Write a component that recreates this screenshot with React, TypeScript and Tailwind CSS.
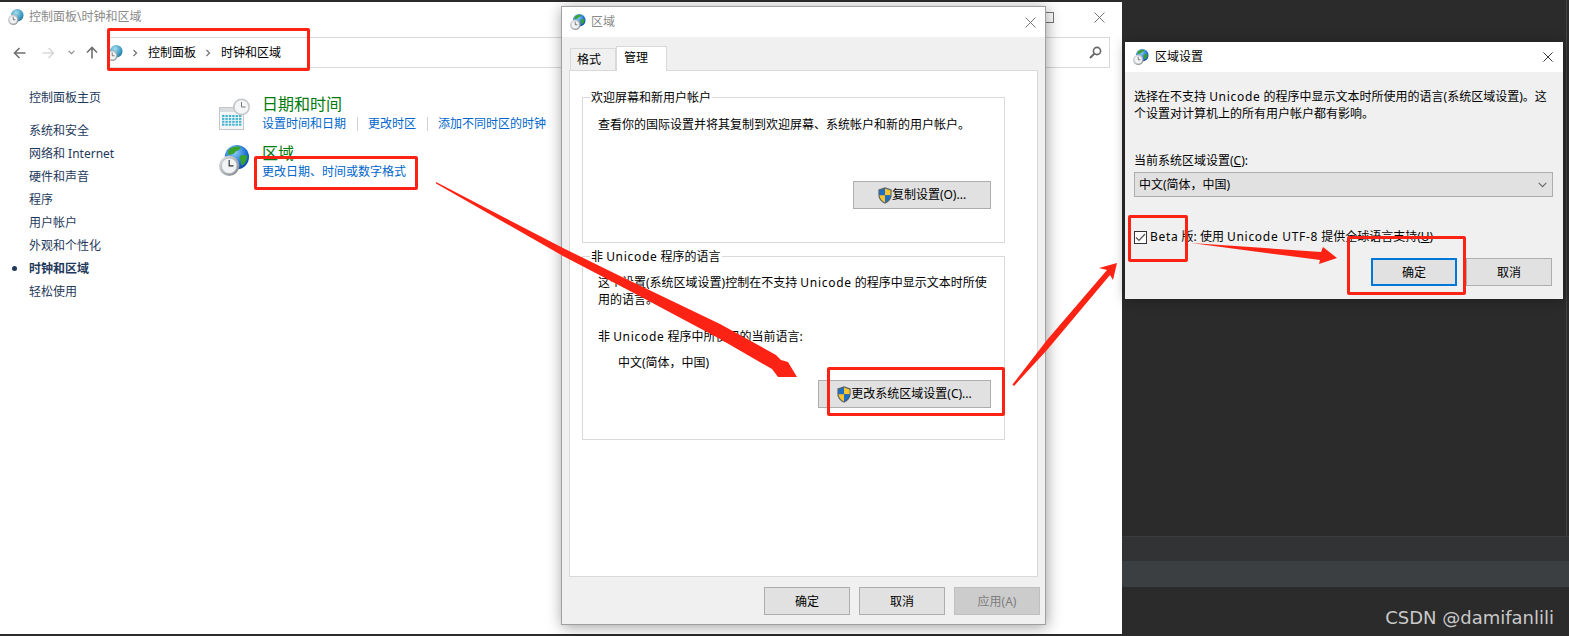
import React from "react";

function ClockGlobe({ size, pale = false, id }: { size: number; pale?: boolean; id: string }) {
  return (
    <svg width={size} height={size} viewBox="0 0 32 32" className="shrink-0">
      <defs>
        <radialGradient id={id + "g"} cx="0.4" cy="0.3" r="0.8">
          <stop offset="0" stopColor={pale ? "#a8dcee" : "#8fd0f5"} />
          <stop offset="0.6" stopColor={pale ? "#3f9dc4" : "#1f72d2"} />
          <stop offset="1" stopColor={pale ? "#1f6f96" : "#0c3f9c"} />
        </radialGradient>
        <linearGradient id={id + "c"} x1="0" y1="0" x2="1" y2="1">
          <stop offset="0" stopColor="#e8eaec" />
          <stop offset="1" stopColor="#7d8387" />
        </linearGradient>
      </defs>
      <circle cx="18.5" cy="12.5" r="12.5" fill={`url(#${id}g)`} />
      {!pale && (
        <path
          d="M10 5c3-3 9-4 12-3 1 2-2 3-3 4-2 0-2 2-4 3-2 0-3 2-5 1-1-1-1-3 0-5zM22 11c2-1 5-1 7 0 0 4-2 8-5 10-2-1-1-4-2-6-1-1-1-3 0-4z"
          fill="#39a32e"
        />
      )}
      <circle cx="10.5" cy="21.5" r="10.5" fill={`url(#${id}c)`} />
      <circle cx="10.5" cy="21.5" r="8" fill="#f2f3f4" stroke="#a6aaad" strokeWidth="0.6" />
      <path d="M10.5 15.5v6l4.5 0" fill="none" stroke="#333" strokeWidth="1.2" />
    </svg>
  );
}

function CalendarClock() {
  const cells: React.ReactElement[] = [];
  for (let r = 0; r < 4; r++) {
    for (let c = 0; c < 6; c++) {
      cells.push(<rect key={`${r}-${c}`} x={3 + c * 3.4} y={17 + r * 2.9} width="2.4" height="2" fill="#42b3d0" />);
    }
  }
  return (
    <svg width="31" height="33" viewBox="0 0 31 33" className="shrink-0">
      <rect x="0.5" y="9.5" width="24" height="22" fill="#f4f6f7" stroke="#c3c7c9" />
      <rect x="1" y="10" width="23" height="4" fill="#d9dde0" />
      {cells}
      <circle cx="22.5" cy="9" r="8.5" fill="#c6c9cb" />
      <circle cx="22.5" cy="9" r="6.8" fill="#f5f6f7" />
      <path d="M22.5 4v5h4" fill="none" stroke="#777" strokeWidth="1" />
    </svg>
  );
}

function Shield() {
  return (
    <svg width="14" height="17" viewBox="0 0 14 17" className="shrink-0">
      <path d="M7 0.3 13.6 2.6V8c0 4-2.8 7-6.6 8.7C3.2 15 0.4 12 0.4 8V2.6z" fill="#59626b" />
      <path d="M7 1.5 1.5 3.4V8.2H7z" fill="#1c6fc4" />
      <path d="M7 1.5 12.5 3.4V8.2H7z" fill="#f7c531" />
      <path d="M1.5 8.2C1.7 11.3 3.9 14 7 15.4V8.2z" fill="#f7c531" />
      <path d="M12.5 8.2C12.3 11.3 10.1 14 7 15.4V8.2z" fill="#1c6fc4" />
    </svg>
  );
}

function CloseX({ color = "#777", size = 11 }: { color?: string; size?: number }) {
  return (
    <svg width={size} height={size} viewBox="0 0 11 11">
      <path d="M0.5 0.5 10.5 10.5M10.5 0.5 0.5 10.5" stroke={color} strokeWidth="1" fill="none" />
    </svg>
  );
}

function Crumb() {
  return (
    <svg width="6" height="8" viewBox="0 0 6 8" className="shrink-0">
      <path d="M1.5 1 4.5 4 1.5 7" fill="none" stroke="#777" strokeWidth="1.3" />
    </svg>
  );
}

function Latin({ children }: { children: React.ReactNode }) {
  return <span className="tracking-[0.7px]">{children}</span>;
}

function WinButton({ label, w = "w-[86px]", disabled = false, focus = false, shield = false }: { label: string; w?: string; disabled?: boolean; focus?: boolean; shield?: boolean }) {
  const tone = disabled
    ? "bg-[#cccccc] border-[#bfbfbf] text-[#7d7d7d]"
    : focus
      ? "bg-[#e1e1e1] border-2 border-[#0078d7] text-black"
      : "bg-[#e1e1e1] border-[#adadad] text-black";
  return (
    <div className={`${w} h-[28px] flex items-center justify-center border ${tone} leading-none`}>
      {shield && <Shield />}
      <span className={shield ? "" : "pt-px"}>{label}</span>
    </div>
  );
}

const sideItems = ["系统和安全", "网络和 Internet", "硬件和声音", "程序", "用户帐户", "外观和个性化", "时钟和区域", "轻松使用"];

function MainWindow() {
  return (
    <div className="absolute left-0 top-[2px] w-[1122px] h-[632px] bg-white flex flex-col text-[12px]">
      <div className="h-[30px] flex items-center pl-[8px] pr-[17px] text-[#8a8a8a]">
        <ClockGlobe size={16} pale id="t1" />
        <span className="ml-[5px] flex-1">控制面板\时钟和区域</span>
        <div className="w-[11px] h-[11px] border border-[#777] mr-[40px]" />
        <CloseX />
      </div>
      <div className="mt-[5px] h-[31px] flex items-center pl-[13px] pr-[12px]">
        <div className="w-[94px] flex items-center shrink-0">
          <svg width="13" height="12" viewBox="0 0 13 12"><path d="M12.5 6H2M6.5 1 1.5 6l5 5" fill="none" stroke="#6f6f6f" strokeWidth="1.6" /></svg>
          <svg className="ml-[16px]" width="13" height="12" viewBox="0 0 13 12"><path d="M.5 6H11M6.5 1l5 5-5 5" fill="none" stroke="#d8d8d8" strokeWidth="1.6" /></svg>
          <svg className="ml-[13px]" width="7" height="5" viewBox="0 0 7 5"><path d="M.7.8 3.5 3.6 6.3.8" fill="none" stroke="#8a8a8a" strokeWidth="1.2" /></svg>
          <svg className="ml-[11px]" width="12" height="13" viewBox="0 0 12 13"><path d="M6 12.5V2M1 6.5l5-5 5 5" fill="none" stroke="#6f6f6f" strokeWidth="1.6" /></svg>
        </div>
        <div className="flex-1 h-[31px] border-y border-[#d9d9d9] flex items-center text-black">
          <ClockGlobe size={16} pale id="t2" />
          <span className="ml-[9px]"><Crumb /></span>
          <span className="ml-[10px]">控制面板</span>
          <span className="ml-[9px]"><Crumb /></span>
          <span className="ml-[10px] flex-1">时钟和区域</span>
          <div className="w-[62px] h-[31px] border-r border-[#d9d9d9] flex items-center justify-end pr-[7px]">
            <svg width="13" height="13" viewBox="0 0 13 13"><circle cx="8" cy="5" r="3.6" fill="none" stroke="#666" strokeWidth="1.6" /><path d="M5.4 7.6 1 12" stroke="#666" strokeWidth="2" /></svg>
          </div>
        </div>
      </div>
      <div className="flex flex-1">
        <div className="w-[218px] pl-[12px] pt-[18px] shrink-0 text-[#1e395b]">
          <div className="pl-[17px] leading-[23px] h-[23px]">控制面板主页</div>
          <div className="mt-[10px] flex flex-col">
            {sideItems.map((s) => (
              <div key={s} className={`flex items-center h-[23px] leading-[23px] ${s === "时钟和区域" ? "font-bold" : ""}`}>
                <span className="w-[17px] flex">
                  {s === "时钟和区域" && <span className="w-[5px] h-[5px] rounded-full bg-[#1e395b]" />}
                </span>
                <span>{s}</span>
              </div>
            ))}
          </div>
        </div>
        <div className="pt-[26px] flex flex-col gap-[10px]">
          <div className="flex">
            <div className="w-[44px] pt-[4px] pl-[1px]"><CalendarClock /></div>
            <div>
              <div className="text-[16px] leading-[20px] text-[#007a0c]">日期和时间</div>
              <div className="flex items-center h-[18px] mt-[1px] text-[#0066cc] leading-[18px]">
                <span>设置时间和日期</span>
                <span className="w-px h-[14px] bg-[#d0d0d0] ml-[11px] mr-[10px]" />
                <span>更改时区</span>
                <span className="w-px h-[14px] bg-[#d0d0d0] ml-[11px] mr-[10px]" />
                <span>添加不同时区的时钟</span>
              </div>
            </div>
          </div>
          <div className="flex -mt-[1px]">
            <div className="w-[44px] pt-[3px] pl-[1px]"><ClockGlobe size={31} id="m1" /></div>
            <div>
              <div className="mt-px text-[16px] leading-[20px] text-[#007a0c]">区域</div>
              <div className="h-[18px] text-[#0066cc] leading-[18px]">更改日期、时间或数字格式</div>
            </div>
          </div>
        </div>
      </div>
    </div>
  );
}

function GroupBox({ title, h, children }: { title: React.ReactNode; h: string; children: React.ReactNode }) {
  return (
    <div className={`ml-[12px] w-[423px] border border-[#d9d9d9] ${h} flex flex-col`}>
      <div className="-mt-[9px] ml-[7px] px-[1px] h-[18px] leading-[18px] bg-white w-fit">{title}</div>
      {children}
    </div>
  );
}

function RegionDialog() {
  return (
    <div className="absolute left-[561px] top-[6px] w-[485px] h-[619px] bg-[#f0f0f0] border border-[#a0a0a0] shadow-[1px_2px_14px_rgba(0,0,0,0.38)] flex flex-col text-[12px] text-black">
      <div className="h-[30px] bg-white flex items-center pl-[8px] pr-[9px]">
        <ClockGlobe size={16} id="d1" />
        <span className="ml-[5px] flex-1 text-[#8a8a8a]">区域</span>
        <CloseX size={11} />
      </div>
      <div className="h-[33px] flex items-end pl-[8px]">
        <div className="w-[46px] h-[22px] bg-[#f0f0f0] border border-b-0 border-[#d9d9d9] pl-[6px] leading-[22px]">格式</div>
        <div className="w-[51px] h-[25px] -mb-px relative bg-white border border-b-0 border-[#d9d9d9] pl-[7px] leading-[21px]">管理</div>
      </div>
      <div className="mx-[7px] h-[507px] bg-white border border-[#d9d9d9] pt-[26px] flex flex-col">
        <GroupBox title="欢迎屏幕和新用户帐户" h="h-[146px]">
          <div className="mt-[9px] pl-[15px] leading-[18px] whitespace-nowrap">查看你的国际设置并将其复制到欢迎屏幕、系统帐户和新的用户帐户。</div>
          <div className="mt-[47px] self-end mr-[13px]"><WinButton label="复制设置(O)..." w="w-[138px]" shield /></div>
        </GroupBox>
        <div className="h-[13px]" />
        <GroupBox title={<>非 <Latin>Unicode</Latin> 程序的语言</>} h="h-[184px]">
          <div className="mt-[8px] pl-[15px] leading-[17px] whitespace-nowrap">这个设置(系统区域设置)控制在不支持 <Latin>Unicode</Latin> 的程序中显示文本时所使<br />用的语言。</div>
          <div className="mt-[20px] pl-[15px] leading-[17px]">非 <Latin>Unicode</Latin> 程序中所使用的当前语言:</div>
          <div className="mt-[9px] pl-[35px] leading-[17px]">{"中文(简体\uFF0C中国)"}</div>
          <div className="mt-[9px] self-end mr-[13px]"><WinButton label="更改系统区域设置(C)..." w="w-[173px]" shield /></div>
        </GroupBox>
      </div>
      <div className="mt-[10px] flex justify-end gap-[9px] pr-[5px]">
        <WinButton label="确定" />
        <WinButton label="取消" />
        <WinButton label="应用(A)" disabled />
      </div>
    </div>
  );
}

function SettingsDialog() {
  return (
    <div className="absolute left-[1125px] top-[42px] w-[438px] h-[257px] bg-[#f0f0f0] shadow-[0_1px_12px_rgba(0,0,0,0.3)] flex flex-col text-[12px] text-black">
      <div className="h-[30px] bg-white flex items-center pl-[8px] pr-[10px]">
        <ClockGlobe size={16} id="d2" />
        <span className="ml-[6px] flex-1">区域设置</span>
        <CloseX color="#222" size={10} />
      </div>
      <div className="px-[9px] pt-[16px] flex flex-col">
        <div className="leading-[17px] whitespace-nowrap">选择在不支持 <Latin>Unicode</Latin> 的程序中显示文本时所使用的语言(系统区域设置)。这<br />个设置对计算机上的所有用户帐户都有影响。</div>
        <div className="mt-[30px] leading-[17px]">当前系统区域设置(<span className="underline">C</span>):</div>
        <div className="mt-[3px] h-[25px] w-[419px] bg-[#e1e1e1] border border-[#adadad] flex items-center justify-between pl-[4px] pr-[5px]">
          <span className="pt-px">{"中文(简体\uFF0C中国)"}</span>
          <svg width="9" height="6" viewBox="0 0 9 6"><path d="M.7.8 4.5 4.6 8.3.8" fill="none" stroke="#666" strokeWidth="1.1" /></svg>
        </div>
        <div className="mt-[32px] h-[16px] flex items-center">
          <div className="w-[13px] h-[13px] border border-[#333] bg-white flex items-center justify-center">
            <svg width="11" height="9" viewBox="0 0 11 9"><path d="M1 4.5 4 7.5 10 1" fill="none" stroke="#555" strokeWidth="1.2" /></svg>
          </div>
          <span className="ml-[3px]"><Latin>Beta</Latin> 版: 使用 <Latin>Unicode UTF-8</Latin> 提供全球语言支持(<span className="underline">U</span>)</span>
        </div>
        <div className="mt-[13px] flex justify-end gap-[9px] pr-[2px]">
          <WinButton label="确定" focus />
          <WinButton label="取消" />
        </div>
      </div>
    </div>
  );
}

function Arrows() {
  return (
    <svg className="absolute inset-0 pointer-events-none" width="1569" height="636" viewBox="0 0 1569 636">
      <polygon fill="#fd2314" points="436,182 563,248 620,276 720,324 776,355 781,360 788,362 797,377 778,377 772,369 720,339 630,291 563,256 436,183.5" />
      <polygon fill="#fd2314" points="1012.5,384.5 1047,340 1107,270 1099,268 1117,263 1113,280 1110,275 1047,350 1014,386" />
      <polygon fill="#fd2314" points="1191,243 1321,252 1323,247 1337,258 1319,264 1320,260" />
    </svg>
  );
}

const redBox = "absolute border-[3px] border-[#fd2314] rounded-[2px] pointer-events-none";

export default function App() {
  return (
    <div className="relative w-[1569px] h-[636px] overflow-hidden bg-[#2b2b2b] font-['Noto_Sans','Noto_Sans_CJK_SC',sans-serif]">
      <div className="absolute left-[1122px] right-0 top-0 bottom-0 flex flex-col">
        <div className="h-[536px] flex justify-end pr-[2px]"><div className="w-px bg-[#414345]" /></div>
        <div className="h-[25px] bg-[#313335] border-t border-[#3a3c3e]" />
        <div className="h-[26px] bg-[#3c3f41]" />
        <div className="flex-1 flex items-center justify-end pr-[15px] pt-[12px] text-[#c9c9c9] text-[18px] font-['DejaVu_Sans',sans-serif] leading-none">CSDN @damifanlili</div>
      </div>
      <MainWindow />
      <RegionDialog />
      <SettingsDialog />
      <div className={`${redBox} left-[107px] top-[28px] w-[203px] h-[43px]`} />
      <div className={`${redBox} left-[254px] top-[156px] w-[164px] h-[34px]`} />
      <div className={`${redBox} left-[827px] top-[367px] w-[178px] h-[49px]`} />
      <div className={`${redBox} left-[1128px] top-[215px] w-[60px] h-[47px]`} />
      <div className={`${redBox} left-[1347px] top-[236px] w-[119px] h-[59px]`} />
      <Arrows />
    </div>
  );
}
